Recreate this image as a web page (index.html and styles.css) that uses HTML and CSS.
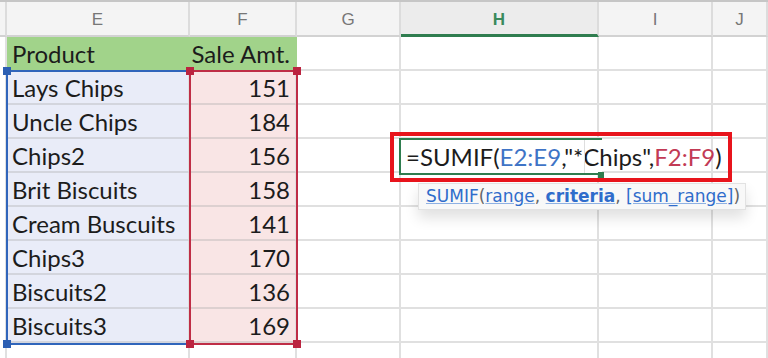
FILE: index.html
```html
<!DOCTYPE html>
<html lang="en">
<head>
    <meta charset="UTF-8">
    <title>SUMIF</title>
    <link rel="stylesheet" href="styles.css">
</head>
<body>
    <div class="sheet">
        <div class="topline"></div>

        <div class="grid">
            <!-- column headers -->
            <div class="col-head"></div>
            <div class="col-head">E</div>
            <div class="col-head">F</div>
            <div class="col-head">G</div>
            <div class="col-head active">H</div>
            <div class="col-head">I</div>
            <div class="col-head">J</div>

            <div class="row-head"></div>
            <div class="cell title">Product</div>
            <div class="cell title num">Sale Amt.</div>
            <div class="cell"></div><div class="cell"></div><div class="cell"></div><div class="cell"></div>

            <div class="row-head"></div>
            <div class="cell prod">Lays Chips</div>
            <div class="cell amt num">151</div>
            <div class="cell"></div><div class="cell"></div><div class="cell"></div><div class="cell"></div>

            <div class="row-head"></div>
            <div class="cell prod">Uncle Chips</div>
            <div class="cell amt num">184</div>
            <div class="cell"></div><div class="cell"></div><div class="cell"></div><div class="cell"></div>

            <div class="row-head"></div>
            <div class="cell prod">Chips2</div>
            <div class="cell amt num">156</div>
            <div class="cell"></div><div class="cell"></div><div class="cell"></div><div class="cell"></div>

            <div class="row-head"></div>
            <div class="cell prod">Brit Biscuits</div>
            <div class="cell amt num">158</div>
            <div class="cell"></div><div class="cell"></div><div class="cell"></div><div class="cell"></div>

            <div class="row-head"></div>
            <div class="cell prod">Cream Buscuits</div>
            <div class="cell amt num">141</div>
            <div class="cell"></div><div class="cell"></div><div class="cell"></div><div class="cell"></div>

            <div class="row-head"></div>
            <div class="cell prod">Chips3</div>
            <div class="cell amt num">170</div>
            <div class="cell"></div><div class="cell"></div><div class="cell"></div><div class="cell"></div>

            <div class="row-head"></div>
            <div class="cell prod">Biscuits2</div>
            <div class="cell amt num">136</div>
            <div class="cell"></div><div class="cell"></div><div class="cell"></div><div class="cell"></div>

            <div class="row-head"></div>
            <div class="cell prod">Biscuits3</div>
            <div class="cell amt num">169</div>
            <div class="cell"></div><div class="cell"></div><div class="cell"></div><div class="cell"></div>

            <div class="row-head"></div>
            <div class="cell"></div><div class="cell"></div><div class="cell"></div>
            <div class="cell"></div><div class="cell"></div><div class="cell"></div>
        </div>

        <!-- referenced ranges -->
        <div class="range blue"></div>
        <div class="range red"></div>
        <div class="handle blue-h" style="left:3px;top:67px"></div>
        <div class="handle blue-h" style="left:3px;top:340px"></div>
        <div class="handle red-h" style="left:186px;top:67px"></div>
        <div class="handle red-h" style="left:293px;top:67px"></div>
        <div class="handle red-h" style="left:186px;top:340px"></div>
        <div class="handle red-h" style="left:293px;top:340px"></div>

        <!-- cell being edited -->
        <div class="editor"><span>=SUMIF(</span><span class="ref-e">E2:E9</span><span>,"*Chips",</span><span class="ref-f">F2:F9</span><span>)</span></div>
        <div class="fill-handle"></div>

        <div class="hint"><span class="fn">SUMIF</span>(<span class="arg">range</span>, <span class="arg cur">criteria</span>, <span class="arg">[sum_range]</span>)</div>

        <div class="callout"></div>
    </div>
</body>
</html>
```

FILE: styles.css
```css
body {
    margin: 0;
    background: #ffffff;
    font-family: "Lato", "Liberation Sans", sans-serif;
}
.sheet {
    position: relative;
    width: 768px;
    height: 358px;
    overflow: hidden;
}
.topline {
    height: 2px;
    background: #c6c6c6;
}
.grid {
    display: grid;
    grid-template-columns: 7px 183px 107px 104px 198px 114px 55px;
    grid-template-rows: 35px;
    grid-auto-rows: 34px;
}
.col-head {
    background: #f4f4f4;
    border-right: 2px solid #dcdcdc;
    border-bottom: 2px solid #d2d2d2;
    display: flex;
    align-items: center;
    justify-content: center;
    padding-top: 3px;
    font-family: "Liberation Sans", Arial, sans-serif;
    font-size: 17px;
    color: #777;
}
.col-head.active {
    background: #ececec;
    color: #3a8a5c;
    font-weight: bold;
    border-bottom: 3px solid #2f7d4f;
}
.row-head {
    border-right: 2px solid #e0e0e0;
}
.cell {
    border-right: 2px solid #e0e0e0;
    border-bottom: 2px solid #e0e0e0;
    display: flex;
    align-items: flex-end;
    padding: 0 5px 1px;
    font-size: 24px;
    color: #1c1c1c;
    white-space: nowrap;
    overflow: hidden;
}
.num {
    justify-content: flex-end;
}
.title {
    background: #a1d38a;
    border-color: #a1d38a;
}
.prod {
    background: #e9ecf8;
    border-bottom-color: #d3d5dd;
}
.amt {
    background: #f9e5e5;
    border-bottom-color: #ddd0d0;
}

.range {
    position: absolute;
    top: 70px;
    height: 275px;
    border: 2px solid;
    box-sizing: border-box;
}
.range.blue {
    left: 6px;
    width: 185px;
    border-color: #3065bb;
}
.range.red {
    left: 189px;
    width: 109px;
    border-color: #bf2d46;
}
.handle {
    position: absolute;
    width: 8px;
    height: 8px;
}
.blue-h {
    background: #2c5fb3;
}
.red-h {
    background: #bb2440;
}

.editor {
    position: absolute;
    left: 399px;
    top: 138px;
    width: 203px;
    height: 37px;
    box-sizing: border-box;
    border: 2px solid #2f7d4f;
    border-right: none;
    background: #fff;
    padding: 0 0 0 5px;
    display: flex;
    align-items: center;
    font-size: 24px;
    color: #1c1c1c;
    white-space: nowrap;
}
.editor::after {
    content: "";
    position: absolute;
    left: 183px;
    top: 0;
    bottom: 0;
    width: 1px;
    background: #dedede;
}
.ref-e {
    color: #3f74c6;
}
.ref-f {
    color: #c23a55;
}
.fill-handle {
    position: absolute;
    left: 598px;
    top: 172px;
    width: 6px;
    height: 6px;
    background: #2f7d4f;
}

.hint {
    position: absolute;
    left: 418px;
    top: 183px;
    width: 328px;
    height: 27px;
    box-sizing: border-box;
    padding-left: 7px;
    background: #f8f8f8;
    border: 1px solid #e2e2e2;
    box-shadow: 0 8px 14px rgba(0, 0, 0, 0.12);
    font-family: "DejaVu Sans", sans-serif;
    font-size: 17px;
    line-height: 24px;
    color: #666;
    white-space: nowrap;
}
.fn,
.arg {
    color: #2f6ccb;
    text-decoration: underline;
    text-decoration-color: #8fb1e3;
}
.cur {
    font-weight: bold;
}

.callout {
    position: absolute;
    left: 390px;
    top: 132px;
    width: 342px;
    height: 50px;
    box-sizing: border-box;
    border: 4px solid #e8141c;
}
```
